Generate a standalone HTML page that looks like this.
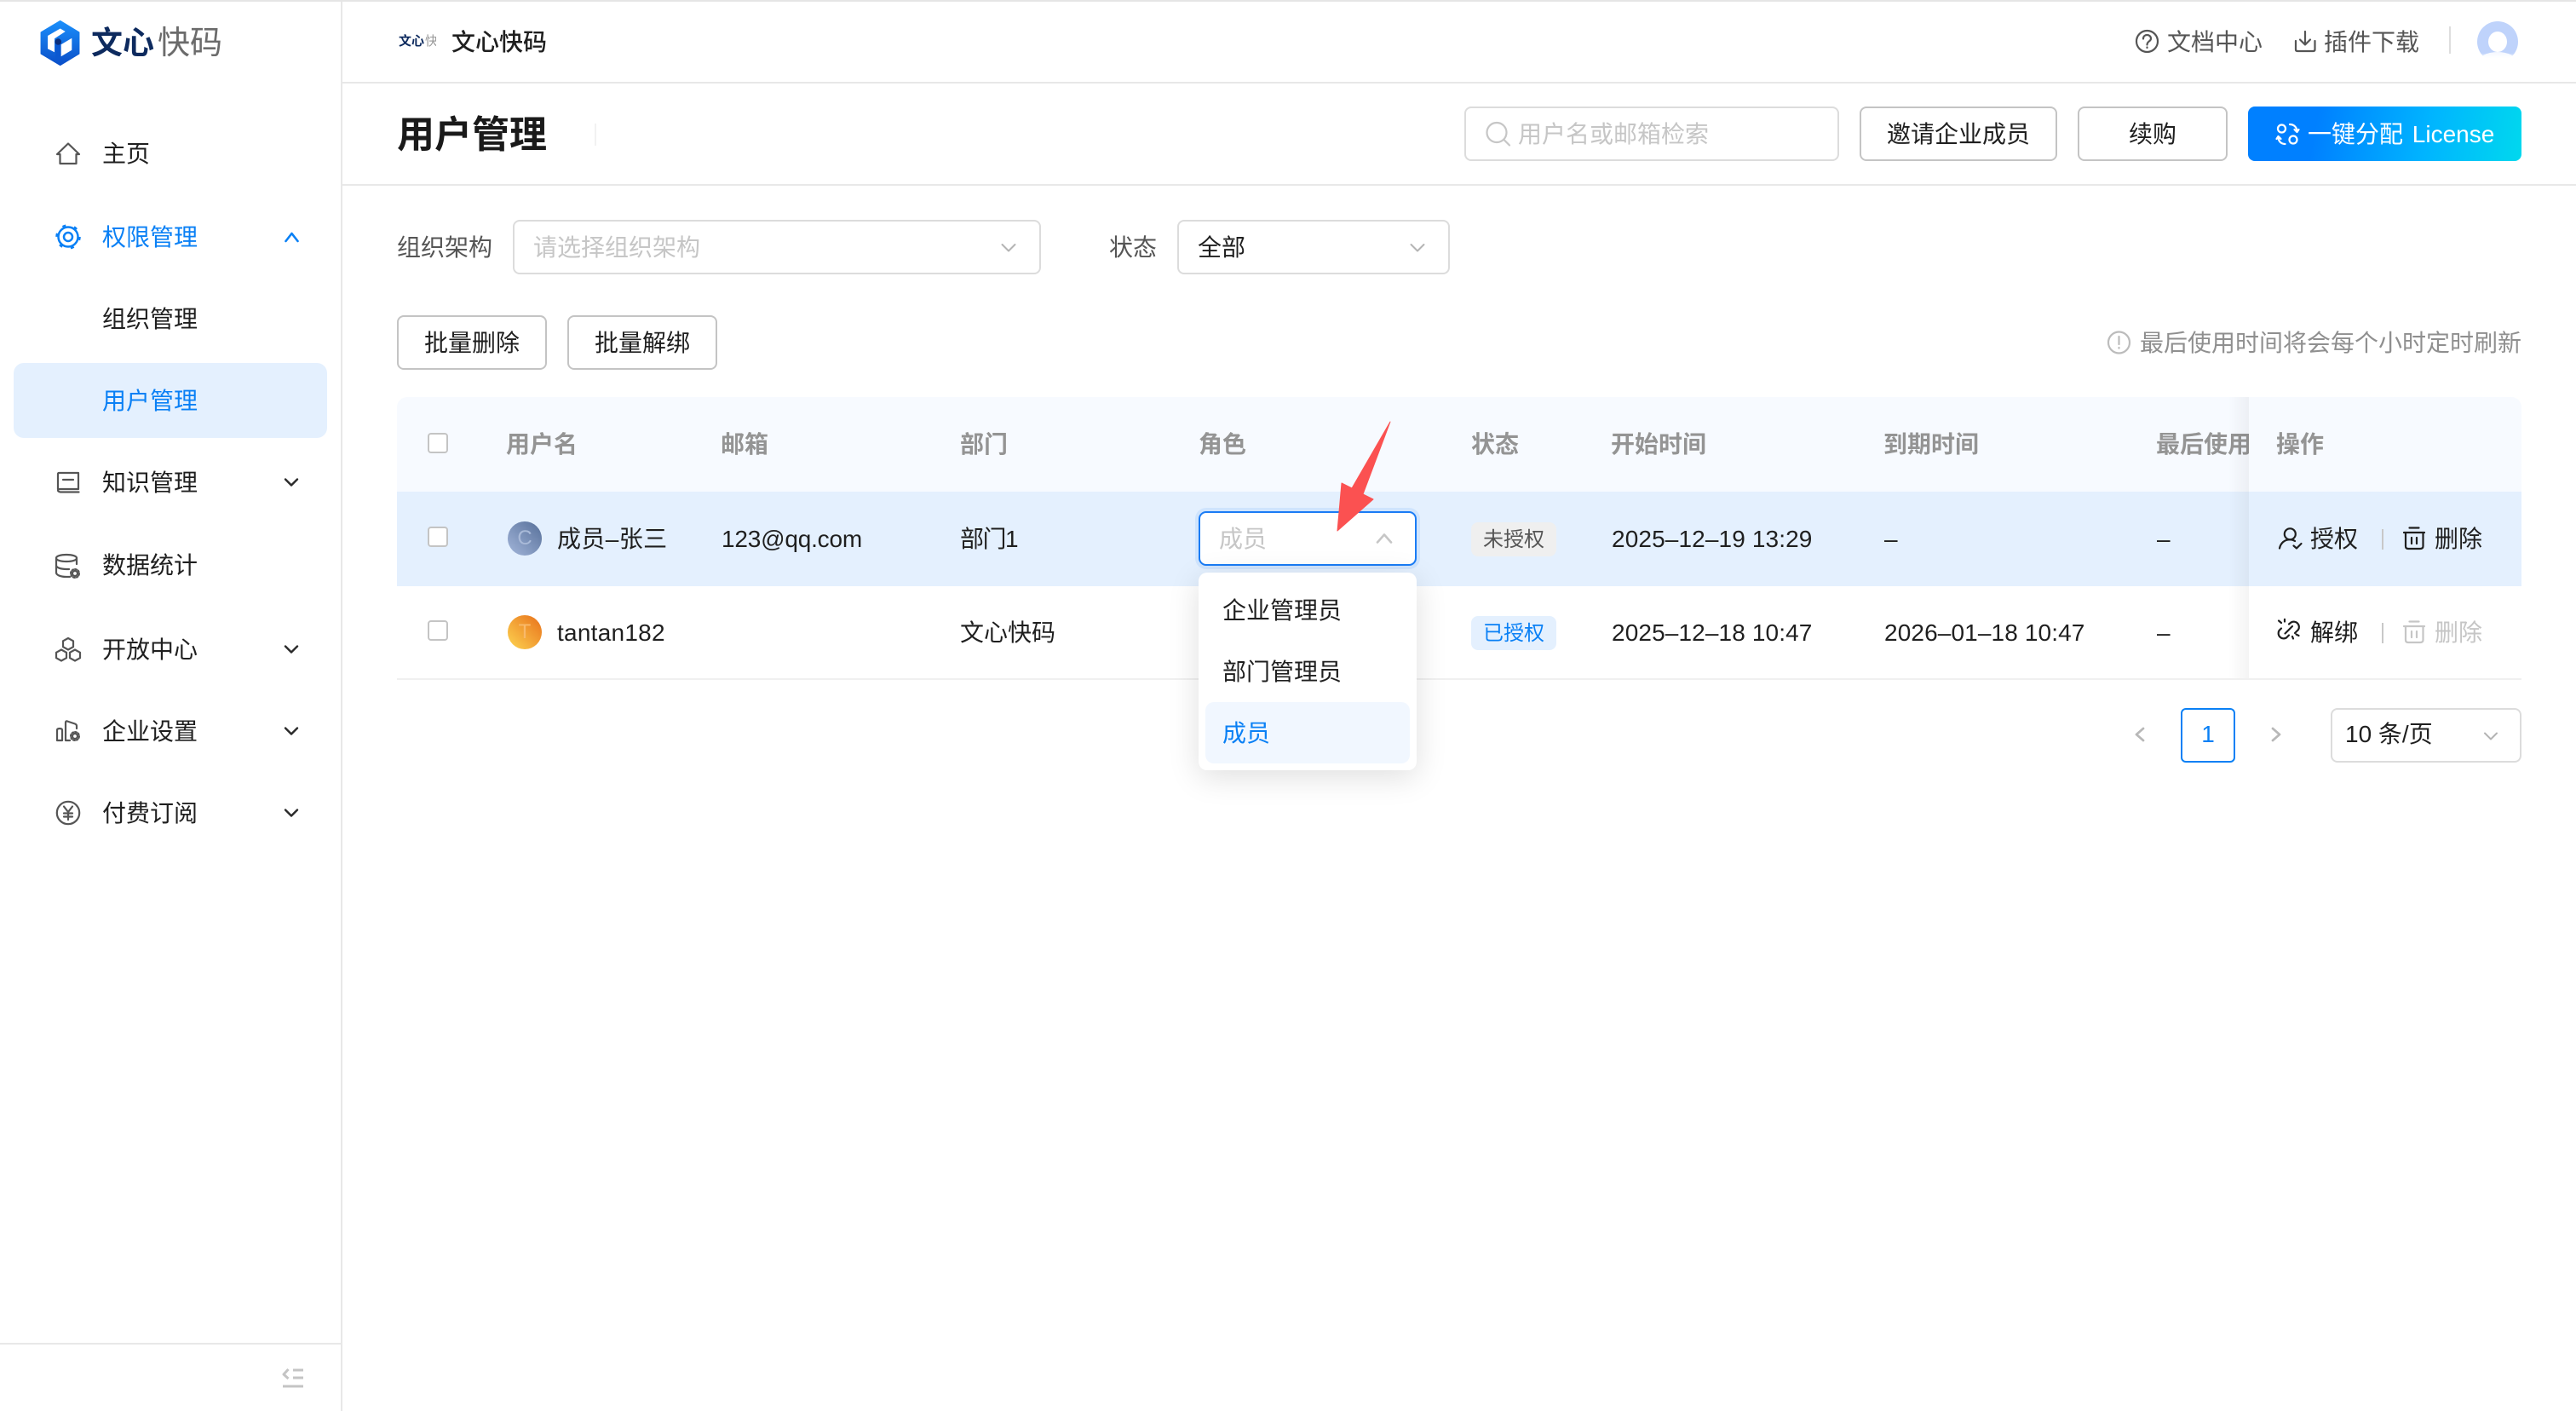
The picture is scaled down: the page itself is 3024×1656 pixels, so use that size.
<!DOCTYPE html>
<html lang="zh-CN">
<head>
<meta charset="utf-8">
<title>用户管理 - 文心快码</title>
<style>
html,body{margin:0;padding:0;background:#fff}
#root{position:relative;width:3024px;height:1656px;overflow:hidden;background:#fff;font-family:"Liberation Sans","Noto Sans CJK SC",sans-serif;font-size:28px;color:#1f1f1f}
#root div,#root span{position:absolute;box-sizing:border-box}
.t{white-space:nowrap;line-height:40px;height:40px;margin-top:1px}
.b{border:2px solid #c4c4c4;border-radius:8px;background:#fff}
.i{border:2px solid #dcdcdc;border-radius:8px;background:#fff}
.g{color:#949494;font-weight:700}
.s{color:#555}
.bl{color:#0a80f5}
.ph{color:#c6c6c6}
.cb{width:24px;height:24px;left:502px;border:2px solid #c4c4c4;border-radius:4px;background:#fff}
svg{position:absolute;left:0;top:0}
</style>
</head>
<body>
<div id="root">
  <!-- frame lines -->
  <div style="left:0;top:0;width:3024px;height:2px;background:#e5e5e5"></div>
  <div style="left:400px;top:2px;width:2px;height:1654px;background:#e8e8e8"></div>
  <div style="left:402px;top:96px;width:2622px;height:2px;background:#e8e8e8"></div>
  <div style="left:402px;top:216px;width:2622px;height:2px;background:#e8e8e8"></div>
  <div style="left:0;top:1576px;width:400px;height:2px;background:#e8e8e8"></div>

  <!-- sidebar -->
  <span class="t" style="left:107px;top:30px;font-size:37px;font-weight:700;color:#0d2a5e">文心</span>
  <span class="t" style="left:185px;top:30px;font-size:38px;color:#6b6b6b">快码</span>
  <div style="left:16px;top:426px;width:368px;height:88px;background:#e4f0fe;border-radius:12px"></div>
  <span class="t" style="left:120px;top:160px">主页</span>
  <span class="t bl" style="left:120px;top:258px">权限管理</span>
  <span class="t" style="left:120px;top:354px">组织管理</span>
  <span class="t bl" style="left:120px;top:450px">用户管理</span>
  <span class="t" style="left:120px;top:546px">知识管理</span>
  <span class="t" style="left:120px;top:643px">数据统计</span>
  <span class="t" style="left:120px;top:742px">开放中心</span>
  <span class="t" style="left:120px;top:838px">企业设置</span>
  <span class="t" style="left:120px;top:934px">付费订阅</span>

  <!-- top bar -->
  <span class="t" style="left:468px;top:28px;font-size:15px;font-weight:700;color:#0d2a5e">文心</span>
  <span class="t" style="left:499px;top:28px;font-size:15px;color:#999;width:13px;overflow:hidden">快</span>
  <span class="t" style="left:530px;top:29px;font-weight:500">文心快码</span>
  <span class="t s" style="left:2544px;top:29px">文档中心</span>
  <span class="t s" style="left:2728px;top:29px">插件下载</span>
  <div style="left:2875px;top:31px;width:2px;height:32px;background:#dedede"></div>

  <!-- page header -->
  <span class="t" style="left:466px;top:138px;font-size:44px;font-weight:700;color:#1a1a1a">用户管理</span>
  <div style="left:698px;top:145px;width:2px;height:26px;background:#f2f2f2"></div>
  <div class="i" style="left:1719px;top:125px;width:440px;height:64px"></div>
  <span class="t ph" style="left:1782px;top:137px">用户名或邮箱检索</span>
  <div class="b" style="left:2183px;top:125px;width:232px;height:64px"></div>
  <span class="t" style="left:2215px;top:137px">邀请企业成员</span>
  <div class="b" style="left:2439px;top:125px;width:176px;height:64px"></div>
  <span class="t" style="left:2499px;top:137px">续购</span>
  <div style="left:2639px;top:125px;width:321px;height:64px;border-radius:8px;background:linear-gradient(100deg,#0080ff 0%,#0080ff 25%,#00b4ff 65%,#00d8ee 100%)"></div>
  <span class="t" style="left:2709px;top:137px;color:#fff;word-spacing:3px">一键分配 License</span>

  <!-- filters -->
  <span class="t s" style="left:466px;top:270px">组织架构</span>
  <div class="i" style="left:602px;top:258px;width:620px;height:64px"></div>
  <span class="t ph" style="left:626px;top:270px">请选择组织架构</span>
  <span class="t s" style="left:1302px;top:270px">状态</span>
  <div class="i" style="left:1382px;top:258px;width:320px;height:64px"></div>
  <span class="t" style="left:1406px;top:270px">全部</span>

  <div class="b" style="left:466px;top:370px;width:176px;height:64px"></div>
  <span class="t" style="left:498px;top:382px">批量删除</span>
  <div class="b" style="left:666px;top:370px;width:176px;height:64px"></div>
  <span class="t" style="left:698px;top:382px">批量解绑</span>
  <span class="t" style="left:2512px;top:382px;color:#8f8f8f">最后使用时间将会每个小时定时刷新</span>

  <!-- table -->
  <div style="left:466px;top:466px;width:2494px;height:111px;background:#f7faff;border-radius:12px 12px 0 0"></div>
  <div style="left:466px;top:577px;width:2494px;height:111px;background:#e4f0fe"></div>
  <div style="left:466px;top:796px;width:2494px;height:2px;background:#f0f0f0"></div>

  <div class="cb" style="top:508px"></div>
  <div class="cb" style="top:618px"></div>
  <div class="cb" style="top:728px"></div>

  <span class="t g" style="left:594px;top:501px">用户名</span>
  <span class="t g" style="left:846px;top:501px">邮箱</span>
  <span class="t g" style="left:1127px;top:501px">部门</span>
  <span class="t g" style="left:1407px;top:501px">角色</span>
  <span class="t g" style="left:1727px;top:501px">状态</span>
  <span class="t g" style="left:1891px;top:501px">开始时间</span>
  <span class="t g" style="left:2211px;top:501px">到期时间</span>
  <span class="t g" style="left:2531px;top:501px">最后使用</span>

  <div style="left:596px;top:612px;width:40px;height:40px;border-radius:50%;background:linear-gradient(45deg,#a3b6da,#566f99);color:#a9bad8;font-size:24px;line-height:40px;text-align:center">C</div>
  <div style="left:596px;top:722px;width:40px;height:40px;border-radius:50%;background:linear-gradient(45deg,#fdd552,#e8701a);color:#f9b96a;font-size:24px;line-height:40px;text-align:center">T</div>

  <span class="t" style="left:654px;top:612px;letter-spacing:.4px">成员–张三</span>
  <span class="t" style="left:654px;top:722px;letter-spacing:.25px">tantan182</span>
  <span class="t" style="left:847px;top:612px;letter-spacing:-.2px">123@qq.com</span>
  <span class="t" style="left:1127px;top:612px;letter-spacing:-1.5px">部门1</span>
  <span class="t" style="left:1127px;top:722px">文心快码</span>

  <div style="left:1727px;top:613px;width:100px;height:40px;background:#efefef;border-radius:8px"></div>
  <span class="t s" style="left:1741px;top:613px;font-size:24px">未授权</span>
  <div style="left:1727px;top:723px;width:100px;height:40px;background:#e4f0fe;border-radius:8px"></div>
  <span class="t bl" style="left:1741px;top:723px;font-size:24px">已授权</span>

  <span class="t" style="left:1892px;top:612px;letter-spacing:.12px">2025–12–19 13:29</span>
  <span class="t" style="left:1892px;top:722px;letter-spacing:.12px">2025–12–18 10:47</span>
  <span class="t" style="left:2212px;top:612px">–</span>
  <span class="t" style="left:2212px;top:722px;letter-spacing:.12px">2026–01–18 10:47</span>
  <span class="t" style="left:2532px;top:612px">–</span>
  <span class="t" style="left:2532px;top:722px">–</span>

  <!-- fixed column -->
  <div style="left:2616px;top:466px;width:24px;height:330px;background:linear-gradient(90deg,rgba(0,0,0,0),rgba(0,0,0,.045))"></div>
  <div style="left:2640px;top:466px;width:320px;height:111px;background:#f7faff;border-radius:0 12px 0 0"></div>
  <div style="left:2640px;top:577px;width:320px;height:111px;background:#e4f0fe"></div>
  <div style="left:2640px;top:688px;width:320px;height:108px;background:#fff"></div>
  <span class="t g" style="left:2672px;top:501px">操作</span>
  <span class="t" style="left:2712px;top:612px">授权</span>
  <div style="left:2796px;top:621px;width:2px;height:24px;background:#c8c8c8"></div>
  <span class="t" style="left:2858px;top:612px">删除</span>
  <span class="t" style="left:2712px;top:722px">解绑</span>
  <div style="left:2796px;top:731px;width:2px;height:24px;background:#c8c8c8"></div>
  <span class="t ph" style="left:2858px;top:722px">删除</span>

  <!-- pagination -->
  <div style="left:2560px;top:831px;width:64px;height:64px;border:2px solid #0a80f5;border-radius:6px;background:#fff"></div>
  <span class="t bl" style="left:2560px;top:841px;width:64px;text-align:center">1</span>
  <div class="i" style="left:2736px;top:831px;width:224px;height:64px"></div>
  <span class="t" style="left:2753px;top:841px">10 条/页</span>

  <!-- role select + dropdown -->
  <div style="left:1407px;top:600px;width:256px;height:64px;border:2px solid #1a7cf5;border-radius:9px;background:#fff;box-shadow:0 0 0 4px rgba(26,124,245,.1)"></div>
  <span class="t ph" style="left:1431px;top:612px">成员</span>
  <div style="left:1407px;top:672px;width:256px;height:232px;background:#fff;border-radius:10px;box-shadow:0 8px 36px rgba(0,0,0,.13)"></div>
  <div style="left:1415px;top:824px;width:240px;height:72px;background:#f1f7ff;border-radius:10px"></div>
  <span class="t" style="left:1435px;top:696px">企业管理员</span>
  <span class="t" style="left:1435px;top:768px">部门管理员</span>
  <span class="t bl" style="left:1435px;top:840px">成员</span>

  <!-- icons -->
  <svg width="3024" height="1656" viewBox="0 0 3024 1656" fill="none" stroke-linecap="round" stroke-linejoin="round">
    <defs>
      <linearGradient id="lg" x1="0" y1="0" x2="0" y2="1"><stop offset="0" stop-color="#1b8ffb"/><stop offset="1" stop-color="#0a4fc9"/></linearGradient>
      <linearGradient id="av" x1="0" y1="0" x2="0" y2="1"><stop offset="0" stop-color="#bfd3fb"/><stop offset=".78" stop-color="#bfd3fb"/><stop offset=".9" stop-color="#fff"/></linearGradient>
    </defs>
    <!-- logo -->
    <polygon points="70.7,24.7 92.7,38 92.7,63 70.7,76.3 48.3,63 48.3,38" fill="url(#lg)" stroke="url(#lg)" stroke-width="1.5"/>
    <polygon points="56,42 70.7,33.5 76.7,37 64,45.3 64,61.3 56,57.3" fill="#fff"/>
    <polygon points="71.7,52.3 84.3,44.7 84.3,58.7 71.7,66.3" fill="#fff"/>
    <path d="M68.3 49V67" stroke="#0b58d0" stroke-width="6"/>
    <circle cx="68.3" cy="49" r="3.8" fill="#0c2f7c"/>

    <!-- sidebar icons -->
    <g stroke="#555" stroke-width="2.2">
      <path d="M80 168.5L67 181H70.5V192H89.5V181H93Z"/>
      <path d="M68 574V556.5Q68 555 69.5 555H92V574H71Q68 574 68 575.5T71 577.5H92.5"/>
      <path d="M74 563H86"/>
      <path d="M90 662V655C90 652.5 84.5 651 78 651S66 652.5 66 655V672C66 674.8 71 677 78 677H82M66 655C66 657.5 71.5 659 78 659S90 657.5 90 655M66 663.5C66 666 71 668 78 668H81"/>
      <polygon points="80,749 86,752.3 86,759.2 80,762.5 74,759.2 74,752.3"/>
      <polygon points="72,762.5 78,765.8 78,772.2 72,775.5 66,772.2 66,765.8"/>
      <polygon points="88,762.5 94,765.8 94,772.2 88,775.5 82,772.2 82,765.8"/>
      <path d="M67 869V857Q67 855 70 855T73 857V869ZM77 869V848Q77 846 79 846.5L88 849.5Q90 850.2 90 852V855M77 869H82"/>
      <circle cx="80" cy="954" r="13.2"/>
      <path d="M75 946.5L80 953L85 946.5M80 953V962M75 954.5H85M75 958.5H85"/>
    </g>
    <g stroke="#555" stroke-width="2.2">
      <circle cx="88" cy="673" r="3"/>
      <circle cx="88" cy="864" r="3"/>
    </g>
    <circle cx="88" cy="673" r="5" stroke="#555" stroke-width="2" stroke-dasharray="2 1.9"/>
    <circle cx="88" cy="864" r="5" stroke="#555" stroke-width="2" stroke-dasharray="2 1.9"/>
    <g stroke="#0a80f5">
      <circle cx="80" cy="278" r="11.5" stroke-width="2.5"/>
      <circle cx="80" cy="278" r="13.5" stroke-width="2.5" stroke-dasharray="4 10.14" stroke-linecap="butt"/>
      <circle cx="80" cy="278" r="5" stroke-width="2.5"/>
      <path d="M335.5 283L342.5 274L349.5 283" stroke-width="2.6"/>
    </g>
    <g stroke="#2a2a2a" stroke-width="2.4">
      <path d="M335 562.5L342 569.5L349 562.5"/>
      <path d="M335 758.5L342 765.5L349 758.5"/>
      <path d="M335 854.5L342 861.5L349 854.5"/>
      <path d="M335 950.5L342 957.5L349 950.5"/>
    </g>
    <!-- collapse -->
    <g stroke="#c4c4c4" stroke-width="3" stroke-linecap="butt">
      <path d="M344 1608H356M344 1617H356M332 1627H356"/>
      <path d="M338.5 1607L333 1613L338.5 1618"/>
    </g>

    <!-- top bar icons -->
    <g stroke="#555" stroke-width="2.2">
      <circle cx="2520.5" cy="48.5" r="12.5"/>
      <path d="M2516 45.5C2516 42.5 2518 41 2520.5 41S2525 42.8 2525 45.2C2525 48.5 2520.5 48.5 2520.5 52.5"/>
      <path d="M2520.5 55.5V56"/>
      <path d="M2695 48V58Q2695 60 2697 60H2715.5Q2717.5 60 2717.5 58V48"/>
      <path d="M2706 37V52M2700 46.5L2706 52.5L2712 46.5"/>
    </g>
    <circle cx="2932" cy="49" r="24" fill="url(#av)"/>
    <ellipse cx="2932" cy="49" rx="11" ry="12" fill="#fff"/>
    <ellipse cx="2932" cy="72" rx="22" ry="11" fill="#fff" opacity=".85"/>

    <!-- search -->
    <g stroke="#c6c6c6" stroke-width="2.2">
      <circle cx="1757" cy="155.5" r="11.5"/>
      <path d="M1765.5 164L1772 170.5"/>
    </g>
    <!-- license icon -->
    <g stroke="#fff" stroke-width="2.2">
      <circle cx="2678.5" cy="151" r="4.5"/>
      <circle cx="2692" cy="164" r="4.5"/>
      <path d="M2688 146C2693 146 2696.5 149.5 2696.5 154.5M2693.5 152L2696.5 155L2698.5 152"/>
      <path d="M2682.5 169C2677.5 169 2674.5 165.5 2674.5 160.5M2672.5 163L2674.5 160L2677.5 163"/>
    </g>
    <!-- select arrows -->
    <g stroke="#b4b4b4" stroke-width="2">
      <path d="M1176.5 287L1184 294.5L1191.5 287"/>
      <path d="M1656.5 287L1664 294.5L1671.5 287"/>
      <path d="M2917 860.5L2924 867.5L2931 860.5"/>
    </g>
    <!-- info -->
    <g stroke="#bcbcbc" stroke-width="2.2">
      <circle cx="2487.5" cy="402" r="12.5"/>
      <path d="M2487.5 395V404M2487.5 408V408.6"/>
    </g>
    <!-- pagination chevrons -->
    <g stroke="#b8b8b8" stroke-width="2.8">
      <path d="M2516 855L2508 862L2516 869"/>
      <path d="M2668 855L2676 862L2668 869"/>
    </g>
    <!-- action icons -->
    <g stroke="#1f1f1f" stroke-width="2.2">
      <circle cx="2688.3" cy="626.8" r="6.5"/>
      <path d="M2676 643.5C2677.3 637 2682 633.3 2688.3 633.3C2690.5 633.3 2692.5 634 2694 635"/>
      <path d="M2692.5 640.5L2696 643.5L2701.5 638"/>
      <path d="M2828.5 619.5H2839.5M2822 625H2846M2824 625V641Q2824 644 2827 644H2841Q2844.5 644 2844.5 641V625M2831 631V638M2837 631V638"/>
      <path d="M2687 732.5L2689.5 730.5A6.2 6.2 0 0 1 2698 739L2694 743M2678 737.5L2675.5 740A6.2 6.2 0 0 0 2684 748.5L2687 745.5M2682.5 743.5L2691 735"/>
      <path d="M2675 728.5L2678 731M2682 726.8V729.5M2698.5 746L2695.5 744.5M2692 749.5L2691 747"/>
    </g>
    <g stroke="#c6c6c6" stroke-width="2.2">
      <path d="M2828.5 729.5H2839.5M2822 735H2846M2824 735V751Q2824 754 2827 754H2841Q2844.5 754 2844.5 751V735M2831 741V748M2837 741V748"/>
    </g>
    <!-- trigger caret -->
    <path d="M1617 636.5L1625 627.5L1633 636.5" stroke="#c6c6c6" stroke-width="2.6"/>
    <!-- red arrow -->
    <polygon points="1632,495 1600,580 1612,586 1570,623 1575,567 1587,573" fill="#fb5151" stroke="#fb5151" stroke-width="1"/>
  </svg>
</div>
</body>
</html>
